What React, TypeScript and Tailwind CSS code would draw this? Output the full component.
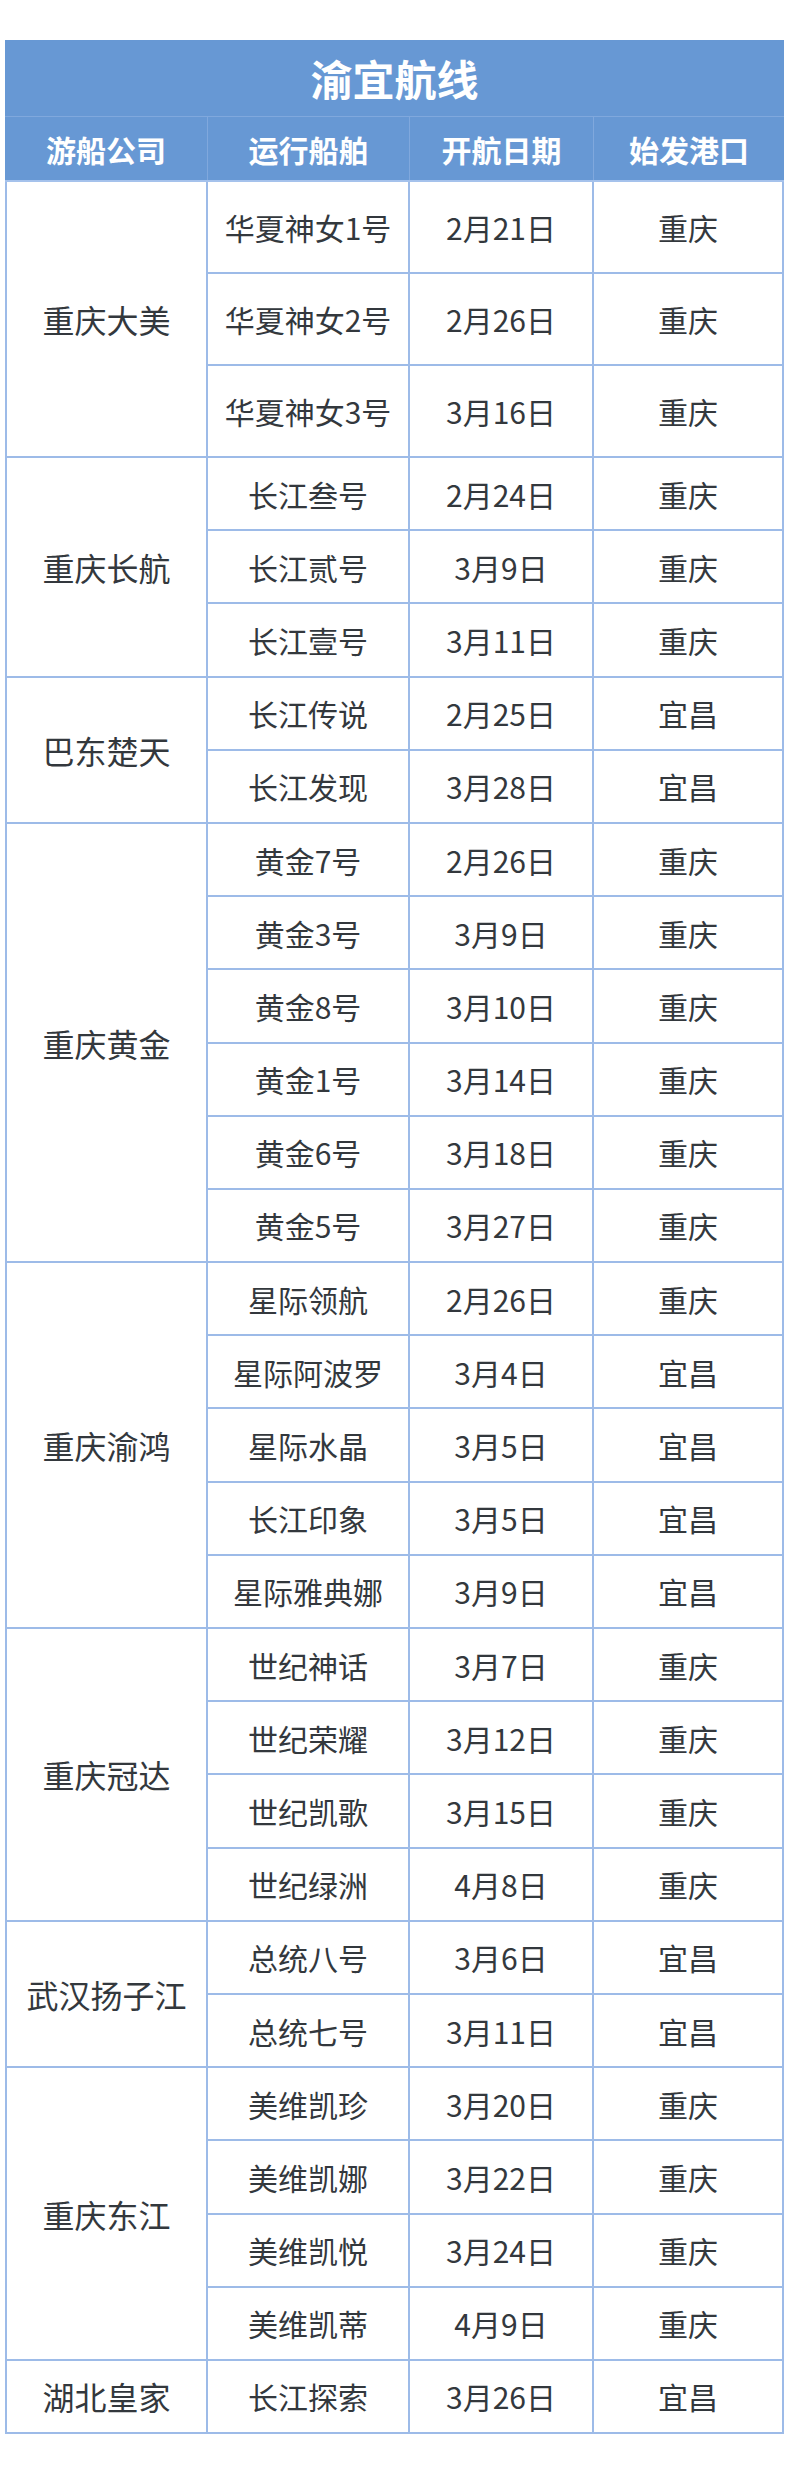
import React from "react";

type Group = { c: string; first?: boolean; rows: [string, string, string][] };

const groups: Group[] = [
  { c: "重庆大美", first: true, rows: [["华夏神女1号", "2月21日", "重庆"], ["华夏神女2号", "2月26日", "重庆"], ["华夏神女3号", "3月16日", "重庆"]] },
  { c: "重庆长航", rows: [["长江叁号", "2月24日", "重庆"], ["长江贰号", "3月9日", "重庆"], ["长江壹号", "3月11日", "重庆"]] },
  { c: "巴东楚天", rows: [["长江传说", "2月25日", "宜昌"], ["长江发现", "3月28日", "宜昌"]] },
  { c: "重庆黄金", rows: [["黄金7号", "2月26日", "重庆"], ["黄金3号", "3月9日", "重庆"], ["黄金8号", "3月10日", "重庆"], ["黄金1号", "3月14日", "重庆"], ["黄金6号", "3月18日", "重庆"], ["黄金5号", "3月27日", "重庆"]] },
  { c: "重庆渝鸿", rows: [["星际领航", "2月26日", "重庆"], ["星际阿波罗", "3月4日", "宜昌"], ["星际水晶", "3月5日", "宜昌"], ["长江印象", "3月5日", "宜昌"], ["星际雅典娜", "3月9日", "宜昌"]] },
  { c: "重庆冠达", rows: [["世纪神话", "3月7日", "重庆"], ["世纪荣耀", "3月12日", "重庆"], ["世纪凯歌", "3月15日", "重庆"], ["世纪绿洲", "4月8日", "重庆"]] },
  { c: "武汉扬子江", rows: [["总统八号", "3月6日", "宜昌"], ["总统七号", "3月11日", "宜昌"]] },
  { c: "重庆东江", rows: [["美维凯珍", "3月20日", "重庆"], ["美维凯娜", "3月22日", "重庆"], ["美维凯悦", "3月24日", "重庆"], ["美维凯蒂", "4月9日", "重庆"]] },
  { c: "湖北皇家", rows: [["长江探索", "3月26日", "宜昌"]] },
];

export default function App() {
  return (
    <div
      className="min-h-[2475px] bg-white pt-[40px]"
      style={{ fontFamily: '"Noto Sans CJK SC", "Noto Sans", sans-serif' }}
    >
      <div className="ml-[5px] w-[779px]">
        <div className="h-[77px] bg-[#6798d4] flex items-center justify-center text-white font-bold text-[42px] leading-none border-b border-[#80a8dd]">
          渝宜航线
        </div>
        <div className="h-[65px] bg-[#6798d4] flex text-white font-bold text-[30px] leading-none border-b-2 border-[#a5c2ec]">
          <div className="w-[203px] flex items-center justify-center border-r border-[#80a8dd]">游船公司</div>
          <div className="w-[202px] flex items-center justify-center border-r border-[#80a8dd]">运行船舶</div>
          <div className="w-[184px] flex items-center justify-center border-r border-[#80a8dd]">开航日期</div>
          <div className="flex-1 flex items-center justify-center">始发港口</div>
        </div>
        <div className="border-l-2 border-r-2 border-[#9dbbe8] text-[#33383d] text-[30px] leading-none">
          {groups.map((g, gi) => (
            <div key={gi} className="flex">
              <div className="w-[201px] shrink-0 border-r-2 border-b-2 border-[#9dbbe8] flex items-center justify-center text-[32px]">
                {g.c}
              </div>
              <div className="flex-1 flex flex-col">
                {g.rows.map((r, ri) => (
                  <div
                    key={ri}
                    className={
                      (g.first ? "h-[92px] " : "h-[73.2px] ") +
                      "border-b-2 border-[#9dbbe8] flex"
                    }
                  >
                    <div className="w-[202px] border-r-2 border-[#9dbbe8] flex items-center justify-center">{r[0]}</div>
                    <div className="w-[184px] border-r-2 border-[#9dbbe8] flex items-center justify-center">{r[1]}</div>
                    <div className="flex-1 flex items-center justify-center">{r[2]}</div>
                  </div>
                ))}
              </div>
            </div>
          ))}
        </div>
      </div>
    </div>
  );
}
